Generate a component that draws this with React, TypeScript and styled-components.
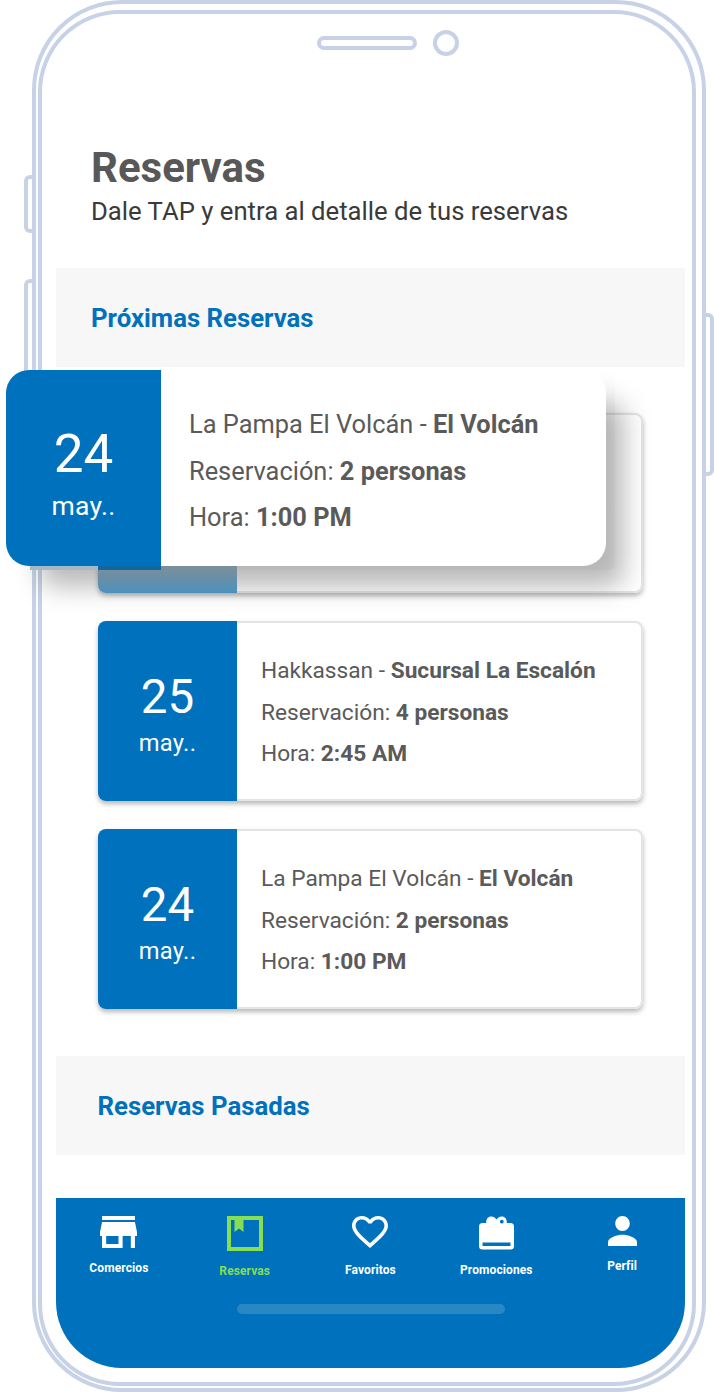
import React from "react";
import styled, { createGlobalStyle } from "styled-components";

const LINE = "#c7d2e6";
const BLUE = "#0071bc";
const GREEN = "#86de54";

const GlobalStyle = createGlobalStyle`
  * { box-sizing: border-box; }
  body {
    margin: 0;
    background: #fff;
    font-family: Roboto, "Liberation Sans", sans-serif;
  }
`;

const Stage = styled.main`
  position: relative;
  width: 714px;
  height: 1392px;
  padding: 0 8px 0 32px;
  overflow: hidden;
`;

const OuterFrame = styled.div`
  position: relative;
  height: 1392px;
  padding: 6px 6px 2px 2px;
  border: 4px solid ${LINE};
  border-radius: 90px;
  background: #fff;
`;

const InnerFrame = styled.div`
  height: 1376px;
  padding: 0 7px 0 14px;
  border: 4px solid ${LINE};
  border-radius: 82px;
`;

const SideButton = styled.span<{ $side: "left" | "right"; $top: number; $height: number }>`
  position: absolute;
  ${(p) => p.$side}: ${(p) => (p.$side === "left" ? "24px" : "0")};
  top: ${(p) => p.$top}px;
  width: 12px;
  height: ${(p) => p.$height}px;
  border: 4px solid ${LINE};
  border-radius: ${(p) => (p.$side === "left" ? "6px 0 0 6px" : "0 6px 6px 0")};
`;

const Screen = styled.div`
  display: flex;
  flex-direction: column;
  width: 629px;
  height: 1354px;
  border-radius: 0 0 66px 66px;
  overflow: hidden;
`;

const Notch = styled.div`
  display: flex;
  align-items: center;
  gap: 16px;
  height: 58px;
  padding-left: 261px;
`;

const Speaker = styled.span`
  width: 100px;
  height: 14px;
  border: 4px solid ${LINE};
  border-radius: 7px;
`;

const Camera = styled.span`
  width: 26px;
  height: 26px;
  border: 4px solid ${LINE};
  border-radius: 50%;
`;

const Header = styled.header`
  height: 196px;
  padding: 71px 0 0 35px;
  white-space: nowrap;
`;

const Title = styled.h1`
  margin: 0;
  font-size: 42px;
  line-height: 50px;
  font-weight: 700;
  color: #585858;
`;

const Subtitle = styled.p`
  margin: 3px 0 0;
  font-size: 25.7px;
  line-height: 30px;
  color: #3a3a3a;
`;

const Band = styled.h2<{ $indent: number }>`
  display: flex;
  flex: none;
  align-items: center;
  height: 98.5px;
  margin: 0;
  padding: 1.5px 0 0 ${(p) => p.$indent}px;
  background: #f7f7f7;
  color: ${BLUE};
  font-size: 25.75px;
  font-weight: 700;
`;

const List = styled.section`
  display: flex;
  flex: none;
  flex-direction: column;
  gap: 28px;
  height: 689.5px;
  padding: 46.5px 42px 0;
`;

const Card = styled.article`
  display: flex;
  flex: none;
  width: 545px;
  height: 180px;
  overflow: hidden;
  border-radius: 8px;
  background: #fff;
  box-shadow: inset 0 0 0 2px #e4e4e4, 0 3px 5px rgba(0, 0, 0, 0.28);
`;

const DateBox = styled.div<{ $large?: boolean; $faded?: boolean }>`
  display: flex;
  flex: none;
  flex-direction: column;
  align-items: center;
  width: ${(p) => (p.$large ? 155 : 139)}px;
  padding-top: ${(p) => (p.$large ? 50 : 46)}px;
  background: ${(p) => (p.$faded ? "linear-gradient(to bottom, #a5c3d6 155px, #529fd0)" : BLUE)};
  color: #fff;
`;

const Day = styled.span<{ $large?: boolean }>`
  font-size: ${(p) => (p.$large ? 53 : 47.5)}px;
  line-height: ${(p) => (p.$large ? 68 : 60)}px;
`;

const Month = styled.span<{ $large?: boolean }>`
  font-size: ${(p) => (p.$large ? 26.5 : 23.7)}px;
  line-height: ${(p) => (p.$large ? 36 : 32)}px;
  letter-spacing: 0.3px;
`;

const Details = styled.div<{ $large?: boolean }>`
  padding: ${(p) => (p.$large ? "31.3px 0 0 28px" : "29px 0 0 24px")};
  color: #5a5a5a;
  font-size: ${(p) => (p.$large ? 25.4 : 22.7)}px;
  line-height: ${(p) => (p.$large ? 46.5 : 41.5)}px;
  white-space: nowrap;
`;

const Line = styled.p`
  margin: 0;
`;

const Lifted = styled.div`
  position: absolute;
  left: 6px;
  top: 370px;
  width: 609px;
  height: 200px;
`;

const LiftedShadow = styled.div`
  position: absolute;
  inset: 32px -9px -17px 34px;
  border-radius: 16px;
  background: rgba(0, 0, 0, 0.27);
  filter: blur(13px);
`;

const LiftedShade = styled.div`
  position: absolute;
  inset: 0 0 0 155px;
  border-radius: 0 0 6px 0;
  background: linear-gradient(to bottom, rgba(120, 120, 120, 0), rgba(120, 120, 120, 0.07) 50px);
`;

const LiftedEdge = styled.div`
  position: absolute;
  left: 24px;
  bottom: 0;
  width: 131px;
  height: 4px;
  background: linear-gradient(to right, #a3b9c6 68px, #10689f 68px);
`;

const LiftedCard = styled.article`
  position: relative;
  display: flex;
  width: 600px;
  height: 196px;
  overflow: hidden;
  border-radius: 23px;
  background: #fff;
`;

const Nav = styled.nav`
  display: flex;
  flex: 1;
  flex-direction: column;
  align-items: center;
  margin-top: 43.5px;
  background: ${BLUE};
`;

const Tabs = styled.div`
  display: grid;
  grid-template-columns: repeat(5, 1fr);
  flex: none;
  width: 100%;
  height: 106px;
`;

const Tab = styled.div<{ $active?: boolean }>`
  display: flex;
  flex-direction: column;
  align-items: center;
  padding-top: 18px;
  color: ${(p) => (p.$active ? GREEN : "#fff")};
`;

const TabLabel = styled.span<{ $gap: number }>`
  margin-top: ${(p) => p.$gap}px;
  font-size: 12px;
  line-height: 14px;
  font-weight: 700;
  letter-spacing: 0.1px;
`;

const HomeBar = styled.span`
  width: 268px;
  height: 10px;
  border-radius: 5px;
  background: rgba(255, 255, 255, 0.16);
`;

const StoreIcon = () => (
  <svg width="37" height="32" viewBox="3 4 18 16" preserveAspectRatio="none" fill="currentColor">
    <path d="M20 4H4v2h16V4zm1 10v-2l-1-5H4l-1 5v2h1v6h10v-6h4v6h2v-6h1zm-9 4H6v-4h6v4z" />
  </svg>
);

const BookIcon = () => (
  <svg width="36" height="35" viewBox="0 0 36 35" fill="currentColor">
    <path fillRule="evenodd" d="M0 0H36V35H0ZM4 4V31H32V4H16.500V16L12 12.500L7.500 16V4Z" />
  </svg>
);

const HeartIcon = () => (
  <svg width="36" height="32" viewBox="2 3 20 18.350" preserveAspectRatio="none" fill="currentColor">
    <path d="M16.500 3c-1.740 0-3.410.810-4.500 2.090C10.910 3.810 9.240 3 7.500 3 4.420 3 2 5.420 2 8.500c0 3.780 3.400 6.860 8.550 11.540L12 21.350l1.450-1.320C18.600 15.360 22 12.280 22 8.500 22 5.420 19.580 3 16.500 3zm-4.400 15.550l-.100.100-.100-.100C7.140 14.240 4 11.390 4 8.500 4 6.500 5.500 5 7.500 5c1.540 0 3.040.990 3.570 2.360h1.870C13.460 5.990 14.960 5 16.500 5c2 0 3.500 1.500 3.500 3.500 0 2.890-3.140 5.740-7.900 10.050z" />
  </svg>
);

const GiftIcon = () => (
  <svg width="35" height="34" viewBox="0 0 35 34" fill="currentColor">
    <path
      fillRule="evenodd"
      d="M3.500 7H7.200C7 3 9 .5 12.200 .5C15 .5 16.500 2 17.500 3.500C18.500 2 20 .5 22.800 .5C26 .5 28 3 27.800 7H31.500Q35 7 35 10.500V30Q35 33.500 31.500 33.500H3.500Q0 33.500 0 30V10.500Q0 7 3.500 7ZM3.500 26.500V30H31.500V26.500ZM22.800 3.700a1.900 1.900 0 1 0 .01 0Z"
    />
  </svg>
);

const PersonIcon = () => (
  <svg width="29" height="30" viewBox="4 4 16 16" preserveAspectRatio="none" fill="currentColor">
    <path d="M12 12c2.210 0 4-1.790 4-4s-1.790-4-4-4-4 1.790-4 4 1.790 4 4 4zm0 2c-2.670 0-8 1.340-8 4v2h16v-2c0-2.660-5.330-4-8-4z" />
  </svg>
);

type Booking = { day: string; place: string; branch: string; people: string; time: string };

const bookings: Booking[] = [
  { day: "25", place: "Hakkassan", branch: "Sucursal La Escalón", people: "4 personas", time: "2:45 AM" },
  { day: "24", place: "La Pampa El Volcán", branch: "El Volcán", people: "2 personas", time: "1:00 PM" },
];

const tabs = [
  { label: "Comercios", icon: <StoreIcon />, gap: 13 },
  { label: "Reservas", icon: <BookIcon />, gap: 13, active: true },
  { label: "Favoritos", icon: <HeartIcon />, gap: 14.5 },
  { label: "Promociones", icon: <GiftIcon />, gap: 12.5 },
  { label: "Perfil", icon: <PersonIcon />, gap: 13 },
];

const BookingContent = ({ booking, large }: { booking: Booking; large?: boolean }) => (
  <>
    <DateBox $large={large}>
      <Day $large={large}>{booking.day}</Day>
      <Month $large={large}>may..</Month>
    </DateBox>
    <Details $large={large}>
      <Line>{booking.place} - <b>{booking.branch}</b></Line>
      <Line>Reservación: <b>{booking.people}</b></Line>
      <Line>Hora: <b>{booking.time}</b></Line>
    </Details>
  </>
);

export default function App() {
  return (
    <Stage>
      <GlobalStyle />
      <SideButton $side="left" $top={175} $height={58} />
      <SideButton $side="left" $top={279} $height={160} />
      <SideButton $side="right" $top={313} $height={163} />
      <OuterFrame>
        <InnerFrame>
          <Screen>
            <Notch>
              <Speaker />
              <Camera />
            </Notch>
            <Header>
              <Title>Reservas</Title>
              <Subtitle>Dale TAP y entra al detalle de tus reservas</Subtitle>
            </Header>
            <Band $indent={35}>Próximas Reservas</Band>
            <List>
              <Card>
                <DateBox $faded />
              </Card>
              {bookings.map((b) => (
                <Card key={b.day}>
                  <BookingContent booking={b} />
                </Card>
              ))}
            </List>
            <Band $indent={41.5}>Reservas Pasadas</Band>
            <Nav>
              <Tabs>
                {tabs.map((t) => (
                  <Tab key={t.label} $active={t.active}>
                    {t.icon}
                    <TabLabel $gap={t.gap}>{t.label}</TabLabel>
                  </Tab>
                ))}
              </Tabs>
              <HomeBar />
            </Nav>
          </Screen>
        </InnerFrame>
      </OuterFrame>
      <Lifted>
        <LiftedShadow />
        <LiftedShade />
        <LiftedEdge />
        <LiftedCard>
          <BookingContent booking={bookings[1]} large />
        </LiftedCard>
      </Lifted>
    </Stage>
  );
}
